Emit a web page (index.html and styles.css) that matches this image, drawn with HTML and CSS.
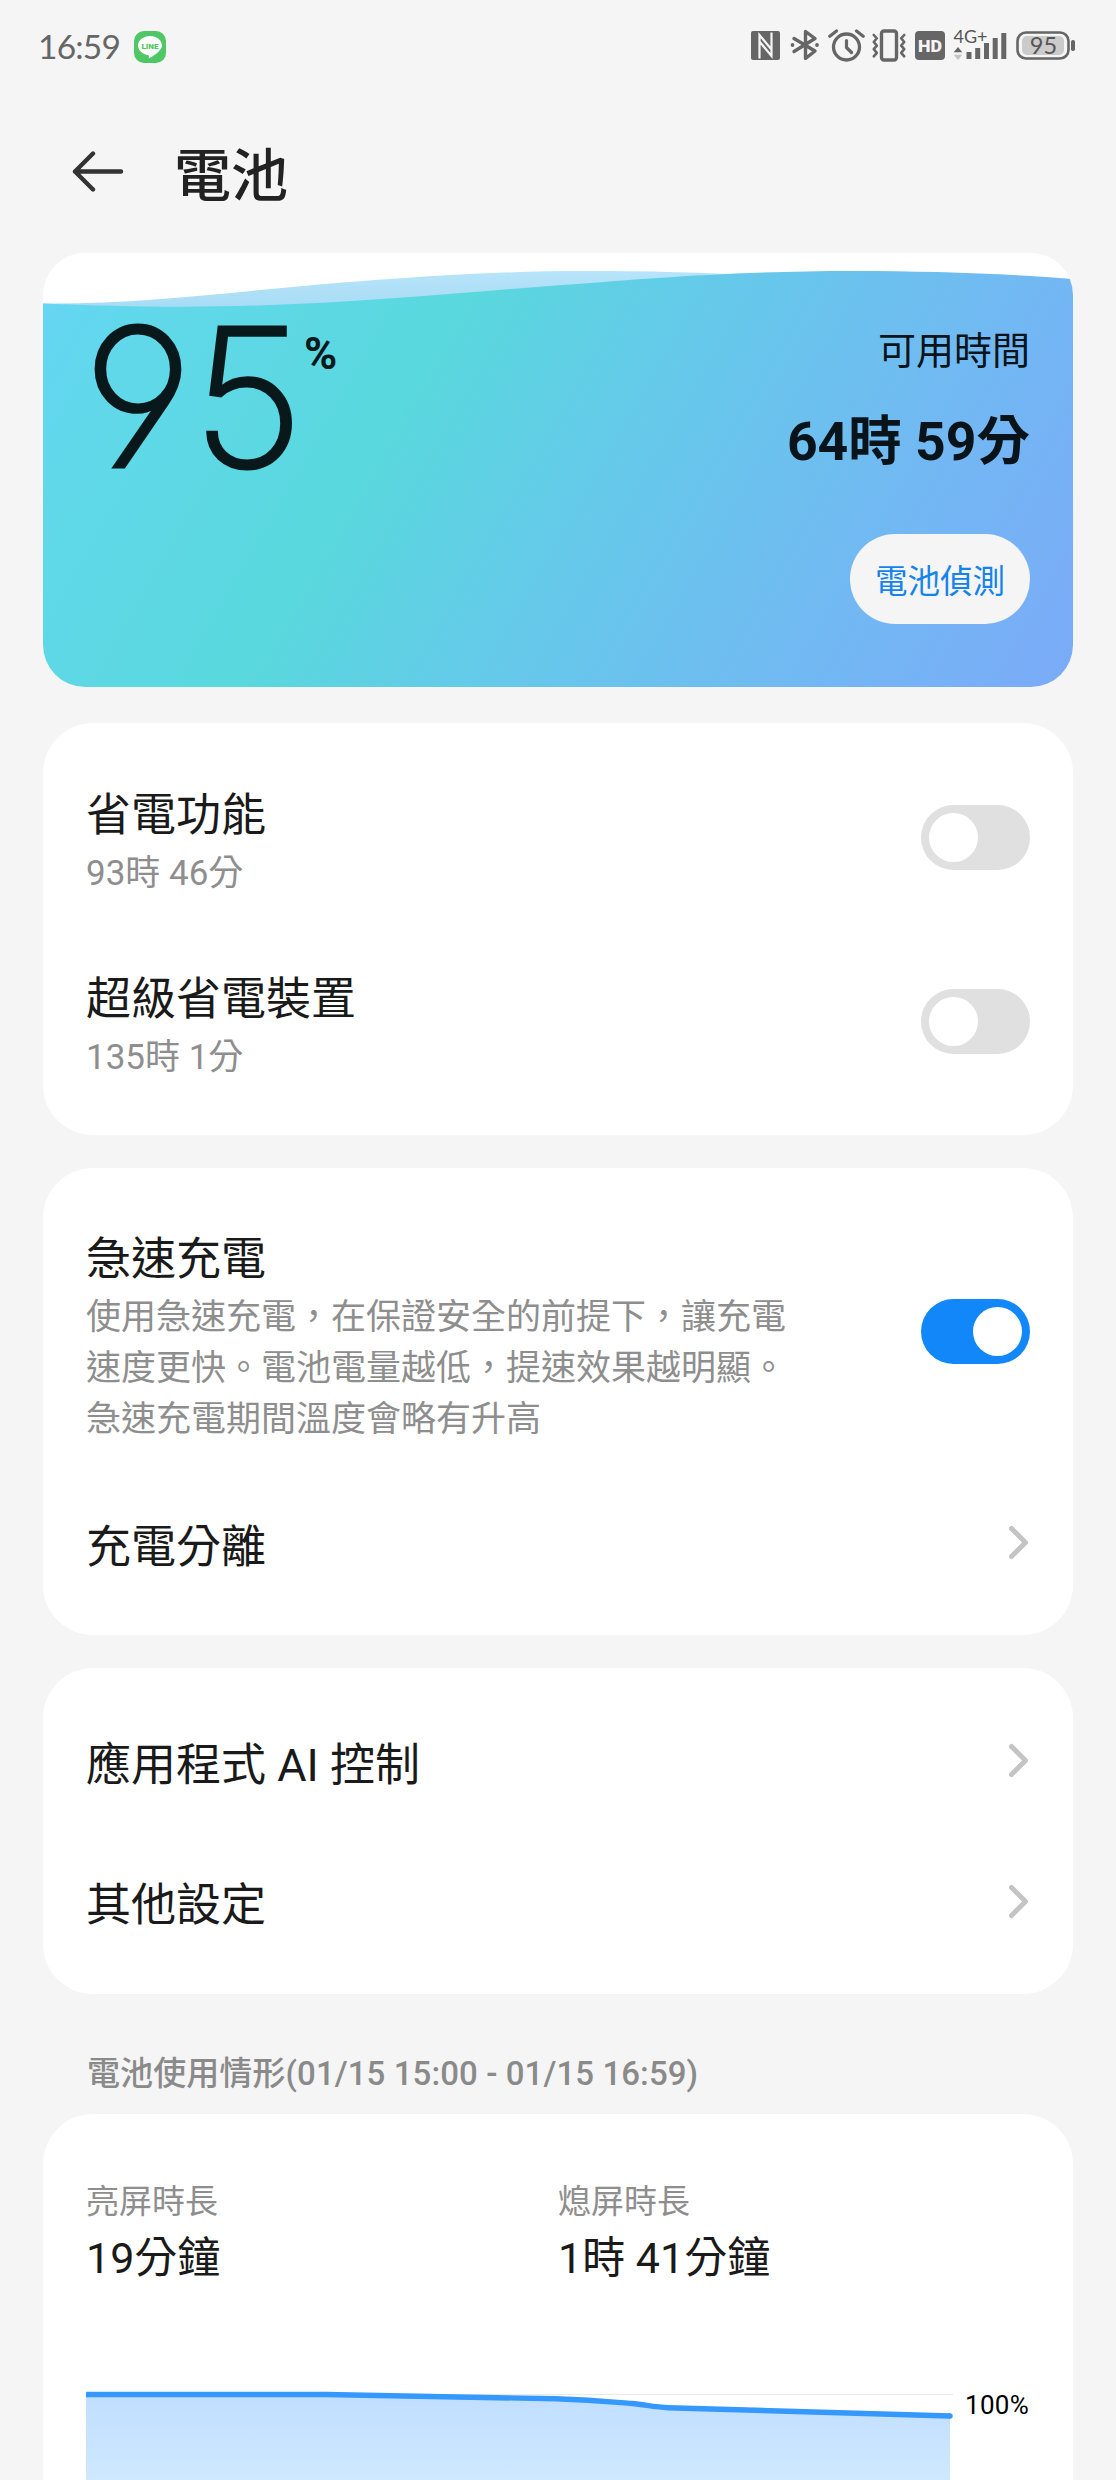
FILE: index.html
```html
<!DOCTYPE html>
<html lang="zh-Hant">
<head>
<meta charset="utf-8">
<title>電池</title>
<link rel="stylesheet" href="styles.css">
</head>
<body>
<div class="statusbar">
  <span class="clock">16:59</span>
  <svg class="line-app" width="32" height="32" viewBox="0 0 32 32">
    <rect width="32" height="32" rx="10" fill="#4fc764"/>
    <path d="M16 5C9.200 5 4 9.300 4 14.600c0 4.600 4 8.500 9.500 9.400 1.500.3 1.600.8 1.300 3.300 3-1.300 7-4 9.700-6.600 2.300-2.200 3.500-4 3.500-6.100C28 9.300 22.800 5 16 5z" fill="#fff"/>
    <text x="16" y="17.700" class="line-text" text-anchor="middle" textLength="17" lengthAdjust="spacingAndGlyphs">LINE</text>
  </svg>
  <div class="status-icons">
    <svg width="29" height="29" viewBox="0 0 29 29">
      <rect width="29" height="29" rx="2" fill="#666"/>
      <path d="M8.500 27.500V4l12 14.500M20.500 1.500V25L8.500 10.500" fill="none" stroke="#f5f5f5" stroke-width="2.200"/>
    </svg>
    <svg class="i-bt" width="30" height="32" viewBox="0 0 30 32">
      <path d="M4 9.500l21 12.500-9.500 7.500V2.500L25 9.500 4 22.500" fill="none" stroke="#666" stroke-width="3.400" stroke-linejoin="round" stroke-linecap="round"/>
      <circle cx="2.500" cy="16" r="1.900" fill="#666"/><circle cx="27" cy="16" r="1.900" fill="#666"/>
    </svg>
    <svg class="i-alarm" width="37" height="33" viewBox="0 0 37 33">
      <circle cx="18.500" cy="18" r="13" fill="none" stroke="#666" stroke-width="3.300"/>
      <path d="M18.500 11.500v7l5 5M1.800 7.200L8.500 2M35.200 7.200L28.500 2" fill="none" stroke="#666" stroke-width="3.200" stroke-linecap="round" stroke-linejoin="round"/>
    </svg>
    <svg class="i-vib" width="34" height="33" viewBox="0 0 34 33">
      <rect x="9.500" y="2" width="15" height="29" rx="2.500" fill="none" stroke="#666" stroke-width="3.400"/>
      <path d="M1.800 6l3 3.300-3 3.700 3 3.600-3 3.600 3 3.600-3 3.500M32.200 6l-3 3.300 3 3.700-3 3.600 3 3.600-3 3.600 3 3.500" fill="none" stroke="#666" stroke-width="2.600" stroke-linejoin="round" stroke-linecap="round"/>
    </svg>
    <svg class="i-hd" width="30" height="29" viewBox="0 0 30 29">
      <rect width="30" height="29" rx="4" fill="#666"/>
      <text x="15" y="20.800" class="hd-text" text-anchor="middle" textLength="24" lengthAdjust="spacingAndGlyphs">HD</text>
    </svg>
    <svg class="i-signal" width="54" height="40" viewBox="0 -3 54 40">
      <text x="0.500" y="14.500" class="net-text" textLength="34" lengthAdjust="spacingAndGlyphs">4G+</text>
      <path d="M5 19l4.300 5.200H.7z" fill="#666"/><path d="M5 32l4.300-5.200H.7z" fill="#c4c4c4"/>
      <path d="M13.500 24h5v7h-5zM22.200 20h5v11h-5zM31 15h5v16h-5zM39.700 10h5v21h-5zM48.300 5h5v26h-5z" fill="#666"/>
    </svg>
    <svg class="i-batt" width="60" height="29" viewBox="0 0 60 29">
      <rect x="1.500" y="1.500" width="51" height="26" rx="8.500" fill="none" stroke="#666" stroke-width="2.600"/>
      <rect x="6" y="5" width="42" height="19" rx="5" fill="#cbcbcb"/>
      <rect x="55" y="9" width="4" height="11" rx="1.800" fill="#666"/>
      <text x="27.500" y="23" class="batt-text" text-anchor="middle">95</text>
    </svg>
  </div>
</div>

<header class="appbar">
  <svg width="52" height="42" viewBox="0 0 52 42">
    <path d="M49 20.500H3M21 2.500l-18 18 18 18" fill="none" stroke="#333" stroke-width="4.400" stroke-linecap="round" stroke-linejoin="round"/>
  </svg>
  <h1>電池</h1>
</header>

<section class="hero">
  <svg class="waves" width="1030" height="434" viewBox="0 0 1030 434">
    <defs>
      <linearGradient id="water" gradientUnits="userSpaceOnUse" x1="34" y1="-60" x2="996" y2="494">
        <stop offset="0" stop-color="#66d5f6"/><stop offset=".12" stop-color="#60d8e9"/><stop offset=".35" stop-color="#59d8dd"/>
        <stop offset=".52" stop-color="#64cbe9"/><stop offset=".79" stop-color="#72b8f3"/><stop offset="1" stop-color="#7baaf8"/>
      </linearGradient>
      <linearGradient id="back" x1="0" y1="0" x2="0" y2="1">
        <stop offset="0" stop-color="#b7e4fa"/><stop offset="1" stop-color="#a6dbf5"/>
      </linearGradient>
    </defs>
    <path d="M0 50.500C100 52 230 34 314 28.500C400 22 470 18 540 18C620 18 690 20 760 26V58H0z" fill="url(#back)"/>
    <path d="M0 50.500C50 52.500 90 53.700 142 53.700C290 53.700 420 39 527 31.500C600 26 690 18 810 18C890 18 970 21 1030 26V434H0z" fill="url(#water)"/>
  </svg>
  <div class="level"><span class="num">95</span><span class="pct">%</span></div>
  <div class="remain">
    <div class="remain-label">可用時間</div>
    <div class="remain-value">64時 59分</div>
    <div class="check-btn">電池偵測</div>
  </div>
</section>

<section class="card">
  <div class="row tall">
    <div class="txt"><div class="title">省電功能</div><div class="sub">93時 46分</div></div>
    <span class="toggle"></span>
  </div>
  <div class="row tall">
    <div class="txt"><div class="title">超級省電裝置</div><div class="sub">135時 1分</div></div>
    <span class="toggle"></span>
  </div>
</section>

<section class="card">
  <div class="row desc">
    <div class="txt"><div class="title">急速充電</div><div class="sub">使用急速充電，在保證安全的前提下，讓充電速度更快。電池電量越低，提速效果越明顯。急速充電期間溫度會略有升高</div></div>
    <span class="toggle on"></span>
  </div>
  <div class="row">
    <div class="txt"><div class="title">充電分離</div></div>
    <svg class="chev" width="21" height="35" viewBox="0 0 21 35"><path d="M2.500 3.500l14 14-14 14"/></svg>
  </div>
</section>

<section class="card">
  <div class="row">
    <div class="txt"><div class="title">應用程式 AI 控制</div></div>
    <svg class="chev" width="21" height="35" viewBox="0 0 21 35"><path d="M2.500 3.500l14 14-14 14"/></svg>
  </div>
  <div class="row">
    <div class="txt"><div class="title">其他設定</div></div>
    <svg class="chev" width="21" height="35" viewBox="0 0 21 35"><path d="M2.500 3.500l14 14-14 14"/></svg>
  </div>
</section>

<h2 class="usage-label">電池使用情形(01/15 15:00 - 01/15 16:59)</h2>

<section class="card usage">
  <div class="stats">
    <div><div class="stat-label">亮屏時長</div><div class="stat-value">19分鐘</div></div>
    <div><div class="stat-label">熄屏時長</div><div class="stat-value">1時 41分鐘</div></div>
  </div>
  <div class="chart">
    <svg width="870" height="100" viewBox="0 0 870 100">
      <defs><linearGradient id="area" gradientUnits="userSpaceOnUse" x1="0" y1="14" x2="0" y2="100">
        <stop offset="0" stop-color="#c0deff"/><stop offset="1" stop-color="#cee8ff"/></linearGradient></defs>
      <path d="M0 14.500H867" stroke="#e8e8e8"/>
      <path d="M0 14.500H240L470 18.800C510 20 530 22.300 546 23.500C560 25 570 27.300 582 27.700L864 36V100H0z" fill="url(#area)"/>
      <path d="M0 14.500H240L470 18.800C510 20 530 22.300 546 23.500C560 25 570 27.300 582 27.700L864 36" fill="none" stroke="#3598fc" stroke-width="5.400"/>
      <circle cx="864" cy="36" r="2.700" fill="#3598fc"/>
    </svg>
    <span class="axis">100%</span>
  </div>
</section>
</body>
</html>
```
FILE: styles.css
```css
* { box-sizing: border-box; }
html { background: #f5f5f5; }
body {
  margin: 0;
  padding: 0 43px;
  height: 2480px;
  overflow: hidden;
  background: #f5f5f5;
  color: #1a1a1a;
  font-family: Roboto, "Noto Sans CJK TC", sans-serif;
}
svg { display: block; flex: none; }

.statusbar {
  display: flex;
  align-items: center;
  height: 94px;
  margin: 0 -43px;
  padding-left: 38px;
}
.clock {
  width: 96px;
  margin-top: -3px;
  font-family: Lato, sans-serif;
  font-size: 33.5px;
  line-height: 40px;
  letter-spacing: -0.8px;
  color: #666;
}
.line-text { font: 900 7.500px Roboto, sans-serif; fill: #4fc764; }
.status-icons {
  display: flex;
  align-items: center;
  margin-left: auto;
  margin-top: -4px;
  padding-right: 40px;
}
.i-bt { margin-left: 10px; }
.i-alarm { margin-left: 8px; }
.i-vib { margin-left: 7px; }
.i-hd { margin-left: 9px; }
.i-signal { margin-left: 8px; }
.i-batt { margin-left: 9px; }
.hd-text { font: 900 17px Roboto, sans-serif; fill: #f5f5f5; }
.net-text { font: 400 18px Lato, sans-serif; fill: #555; }
.batt-text { font: 400 23.500px Lato, sans-serif; fill: #555; }

.appbar {
  display: flex;
  align-items: flex-start;
  height: 159px;
  padding: 57px 0 0 29px;
}
.appbar h1 {
  margin: -14px 0 0 50px;
  font-size: 57px;
  font-weight: 500;
  line-height: 80px;
  color: #222;
}

.hero {
  position: relative;
  display: flex;
  justify-content: space-between;
  height: 434px;
  padding: 0 43px;
  border-radius: 42px;
  overflow: hidden;
  background: #fff;
}
.waves { position: absolute; left: 0; top: 0; }
.level, .remain { position: relative; color: #08181b; }
.level { display: flex; align-items: flex-start; padding: 47px 0 0 0; }
.num {
  width: 221px;
  margin-left: -3px;
  font-family: Inter, sans-serif;
  font-feature-settings: "ss01" 1;
  font-weight: 200;
  font-size: 193px;
  line-height: 195px;
  letter-spacing: -1px;
  -webkit-text-stroke: 3px #08181b;
  stroke-linejoin: round;
}
.pct { margin: 29px 0 0 0; font-size: 45px; font-weight: 700; line-height: 50px; }
.remain {
  display: flex;
  flex-direction: column;
  align-items: flex-end;
  padding-top: 72.600px;
  color: #08131a;
}
.remain-label { font-size: 38px; line-height: 50px; }
.remain-value { margin-top: 31px; font-size: 53.500px; font-weight: 700; line-height: 70px; }
.check-btn {
  width: 180px;
  height: 90px;
  margin-top: 57px;
  padding-top: 3px;
  border-radius: 45px;
  background: #f5f5f5;
  color: #1583ec;
  font-size: 32.500px;
  line-height: 90px;
  text-align: center;
}

.card {
  margin-top: 33.330px;
  padding: 22px 43px;
  border-radius: 50px;
  background: #fff;
}
.hero + .card { margin-top: 36px; }
.row {
  display: flex;
  align-items: center;
  justify-content: space-between;
  height: 140.670px;
}
.row.tall { height: 184px; }
.row.desc { height: 282px; }
.txt { padding-top: 10px; }
.tall .txt { padding-top: 8px; }
.title { font-size: 45px; line-height: 64px; }
.sub { width: 710px; font-size: 35px; line-height: 51px; color: #8e8e8e; }
.toggle {
  display: flex;
  width: 109px;
  height: 65px;
  padding: 8px;
  border-radius: 33px;
  background: #e0e0e0;
}
.toggle::before { content: ""; width: 49px; height: 49px; border-radius: 50%; background: #fff; }
.toggle.on { justify-content: flex-end; background: #1287f9; }
.chev path { fill: none; stroke: #c4c4c4; stroke-width: 5; stroke-linecap: round; stroke-linejoin: round; }

.usage-label {
  margin: 60.700px 0 19.600px 44px;
  font-size: 33px;
  font-weight: 500;
  line-height: 40px;
  letter-spacing: 0.090px;
  color: #8a8a8a;
}
.usage { margin-top: 0; padding: 62.700px 43px 0; height: 460px; }
.stats { display: grid; grid-template-columns: 1fr 1fr; }
.stat-label { font-size: 33px; line-height: 50px; color: #8e8e8e; }
.stat-value { font-size: 43px; line-height: 62px; }
.chart { display: flex; margin-top: 91.300px; }
.axis { margin: 10px 0 0 9px; font-size: 26px; line-height: 30px; letter-spacing: 0.3px; color: #000; }
```
